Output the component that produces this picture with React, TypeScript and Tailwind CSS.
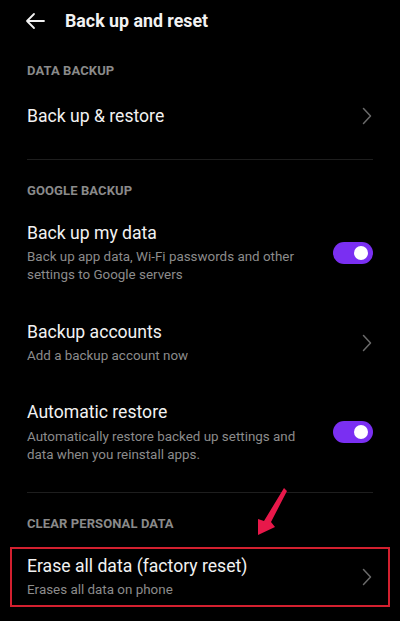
const Chevron = () => (
  <svg width="10" height="18" viewBox="0 0 10 18" fill="none" className="shrink-0">
    <path d="M1.5 1.5L8.5 9L1.5 16.5" stroke="#6a6a6a" strokeWidth="1.5" strokeLinecap="round" strokeLinejoin="round" />
  </svg>
);

const Toggle = () => (
  <div className="flex h-[22px] w-[40px] shrink-0 items-center justify-end rounded-full bg-[#7a2ff2] pr-[5px]">
    <div className="h-[14px] w-[14px] rounded-full bg-white" />
  </div>
);

const SectionLabel = ({ text, className }: { text: string; className: string }) => (
  <div className={`h-[20px] px-[27px] text-[13px] leading-[20px] font-bold tracking-[0.1px] text-[#8a8a8a] ${className}`}>
    {text}
  </div>
);

const Divider = ({ className }: { className: string }) => (
  <div className={`mx-[27px] h-px bg-[#1e1e1e] ${className}`} />
);

export default function App() {
  return (
    <div
      className="relative h-[621px] w-[400px] overflow-hidden bg-black text-[#f2f2f2]"
      style={{ fontFamily: "Roboto, 'Noto Sans', sans-serif" }}
    >
      {/* header */}
      <div className="flex h-[42px] items-center">
        <svg width="20" height="18" viewBox="0 0 20 18" fill="none" className="ml-[25px]">
          <path d="M19 9H2M9 2L2 9l7 7" stroke="#f2f2f2" strokeWidth="1.8" strokeLinecap="round" strokeLinejoin="round" />
        </svg>
        <span className="ml-[20px] text-[17.8px] font-bold">Back up and reset</span>
      </div>

      <SectionLabel text="DATA BACKUP" className="mt-[19px]" />

      <div className="mt-[23px] flex items-center justify-between pr-[28px] pl-[27px]">
        <span className="text-[17.6px] leading-[24px]">Back up &amp; restore</span>
        <Chevron />
      </div>

      <Divider className="mt-[31px]" />

      <SectionLabel text="GOOGLE BACKUP" className="mt-[21px]" />

      <div className="mt-[20px] flex items-center justify-between pr-[27px] pl-[27px]">
        <div>
          <div className="text-[17.6px] leading-[24px]">Back up my data</div>
          <div className="mt-[3px] text-[13.4px] leading-[18px] text-[#8c8c8c]">
            Back up app data, Wi-Fi passwords and other
            <br />
            settings to Google servers
          </div>
        </div>
        <Toggle />
      </div>

      <div className="mt-[36px] flex items-center justify-between pr-[28px] pl-[27px]">
        <div>
          <div className="text-[17.6px] leading-[24px]">Backup accounts</div>
          <div className="mt-[3px] text-[13.4px] leading-[18px] text-[#8c8c8c]">Add a backup account now</div>
        </div>
        <Chevron />
      </div>

      <div className="mt-[35px] flex items-center justify-between pr-[27px] pl-[27px]">
        <div>
          <div className="text-[17.6px] leading-[24px]">Automatic restore</div>
          <div className="mt-[4px] text-[13.4px] leading-[18px] text-[#8c8c8c]">
            Automatically restore backed up settings and
            <br />
            data when you reinstall apps.
          </div>
        </div>
        <Toggle />
      </div>

      <Divider className="mt-[28px]" />

      <SectionLabel text="CLEAR PERSONAL DATA" className="mt-[21px]" />

      <div className="mx-[10px] mt-[13px] flex items-center justify-between border-2 border-[#d3202f] pt-[5px] pr-[16px] pb-[6px] pl-[15px]">
        <div>
          <div className="text-[17.6px] leading-[24px]">Erase all data (factory reset)</div>
          <div className="mt-[3px] text-[13.4px] leading-[18px] text-[#8c8c8c]">Erases all data on phone</div>
        </div>
        <Chevron />
      </div>

      {/* annotation arrow */}
      <svg width="45" height="56" viewBox="0 0 45 56" className="absolute top-[484px] left-[250px]">
        <polygon points="34,4 37,7 21,38 25,43 8,51 8,35 14,37" fill="#e8184a" />
      </svg>
    </div>
  );
}
